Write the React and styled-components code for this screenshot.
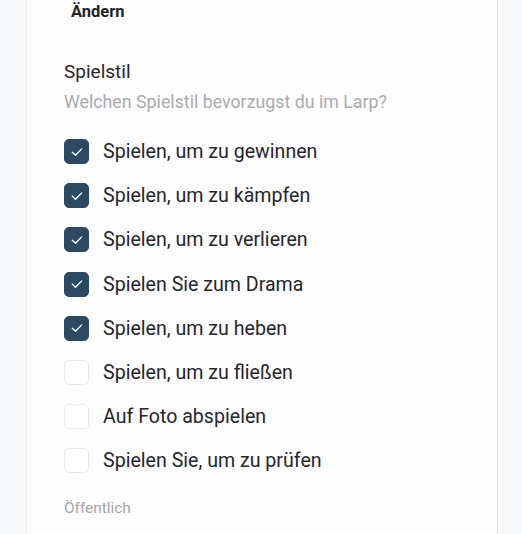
import styled, { createGlobalStyle } from "styled-components";

// Globale Styles: Hintergrund und Schrift
const GlobalStyle = createGlobalStyle`
    body {
        margin: 0;
        background-color: #f8f9fb;
        font-family: Roboto, "Noto Sans", sans-serif;
    }
`;

const items = [
    { text: "Spielen, um zu gewinnen", checked: true },
    { text: "Spielen, um zu kämpfen", checked: true },
    { text: "Spielen, um zu verlieren", checked: true },
    { text: "Spielen Sie zum Drama", checked: true },
    { text: "Spielen, um zu heben", checked: true },
    { text: "Spielen, um zu fließen", checked: false },
    { text: "Auf Foto abspielen", checked: false },
    { text: "Spielen Sie, um zu prüfen", checked: false },
];

const Check = () => (
    <svg width="14" height="14" viewBox="0 0 14 14" fill="none">
        <path d="M2.3 7.3 L5.5 10.3 L11.7 3.9" stroke="white" strokeWidth="1.3" strokeLinecap="round" strokeLinejoin="round" />
    </svg>
);

const App = () => {
    return (
        <>
            <GlobalStyle />
            <Page>
                <Card>
                    <EditButton>Ändern</EditButton>
                    <Title>Spielstil</Title>
                    <Subtitle>Welchen Spielstil bevorzugst du im Larp?</Subtitle>
                    <List>
                        {items.map(item => (
                            <Row key={item.text}>
                                <Box checked={item.checked}>{item.checked && <Check />}</Box>
                                <Label>{item.text}</Label>
                            </Row>
                        ))}
                    </List>
                    <Visibility>Öffentlich</Visibility>
                </Card>
            </Page>
        </>
    );
};

export default App;

// ------ STYLED COMPONENTS ------  //

const Page = styled.div`
    height: 534px;
    overflow: hidden;
    padding: 0 24px 0 26px;
`;

const Card = styled.div`
    background-color: #fdfdfd;
    border-left: 1px solid #eceef1;
    border-right: 1px solid #e3e5e8;
    box-sizing: border-box;
    height: 534px;
    padding: 0 0 0 37px;
    width: 472px;
`;

const EditButton = styled.div`
    color: #1f2328;
    font-size: 16.5px;
    font-weight: 700;
    line-height: 24px;
    padding: 0 0 0 7px;
`;

const Title = styled.div`
    color: #24272b;
    font-size: 19px;
    line-height: 24px;
    margin-top: 36px;
`;

const Subtitle = styled.div`
    color: #a9abae;
    font-size: 17.8px;
    line-height: 22px;
    margin-top: 7px;
`;

const List = styled.div`
    display: flex;
    flex-direction: column;
    gap: 19.2px;
    margin-top: 26px;
`;

const Row = styled.div`
    align-items: center;
    display: flex;
    gap: 14px;
    height: 25px;
`;

const Box = styled.div`
    align-items: center;
    background-color: ${props => props.checked ? "#2c4a64" : "#ffffff"};
    border: 1px solid ${props => props.checked ? "#2c4a64" : "#e8e9eb"};
    border-radius: 5px;
    box-sizing: border-box;
    display: flex;
    flex-shrink: 0;
    height: 25px;
    justify-content: center;
    width: 25px;
`;

const Label = styled.span`
    color: #24272b;
    font-size: 19.6px;
`;

const Visibility = styled.div`
    color: #a3a5a8;
    font-size: 15.4px;
    margin-top: 26px;
`;
